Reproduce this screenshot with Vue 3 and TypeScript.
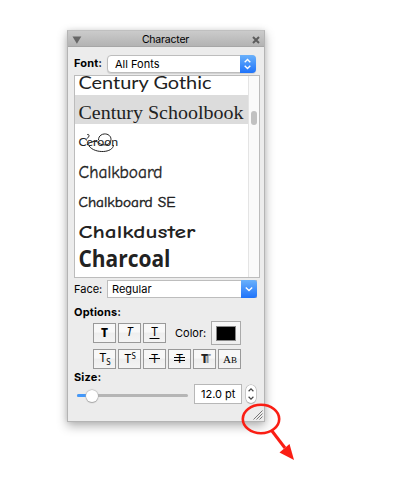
<script setup lang="ts">
interface Sample {
  name: string
  cls: string
  height: number
  baseline: number
  width: number
}

const samples: Sample[] = [
  { name: 'Century Gothic', cls: 'gothic', height: 19, baseline: 13, width: 133 },
  { name: 'Century Schoolbook', cls: 'school', height: 29, baseline: 24, width: 165 },
  { name: 'Ceroon', cls: 'ceroon', height: 34, baseline: 22, width: 39.5 },
  { name: 'Chalkboard', cls: 'chalk', height: 30, baseline: 20, width: 84 },
  { name: 'Chalkboard SE', cls: 'chalkse', height: 30, baseline: 19, width: 97 },
  { name: 'Chalkduster', cls: 'duster', height: 27, baseline: 20, width: 117 },
  { name: 'Charcoal', cls: 'charcoal', height: 32, baseline: 22, width: 92 },
]
const selected = 'Century Schoolbook'
const size = '12.0 pt'
</script>

<template>
  <main class="stage">
    <section class="panel">
      <header class="title">
        <svg class="tri" width="10" height="8"><path d="M0.5 0.5H9.3L4.9 7.8Z" fill="#666" /></svg>
        <span>Character</span>
        <svg class="close" width="8" height="8"><path d="M1 1L7 7M7 1L1 7" stroke="#5c5c5c" stroke-width="2" /></svg>
      </header>

      <div class="row font-row">
        <b class="label">Font:</b>
        <div class="select rounded">
          <span>All Fonts</span>
          <i class="cap"><svg width="15" height="18"><path d="M4.7 7.2L7.5 4.5L10.3 7.2M4.7 10.8L7.5 13.5L10.3 10.8" /></svg></i>
        </div>
      </div>

      <div class="list">
        <div class="items">
          <div
            v-for="s in samples"
            :key="s.name"
            class="item"
            :class="{ on: s.name === selected }"
            :style="{ height: s.height + 'px' }"
          >
            <svg width="173" :height="s.height">
              <text :class="s.cls" x="3.5" :y="s.baseline" :textLength="s.width" lengthAdjust="spacingAndGlyphs">{{ s.name }}</text>
              <path
                v-if="s.cls === 'ceroon'"
                class="swash"
                d="M12 11C13 9.5 15 11 13.5 13C12 15 10 15.5 12 16.5M23.5 16C23.5 8 36 8 36 15.5C36 22 27 22 24 19C20 15.5 15 18 12 21M14 22C20 30 38 29 38.5 21"
              />
            </svg>
          </div>
        </div>
        <div class="scroll"><i></i></div>
      </div>

      <div class="row face-row">
        <span class="label">Face:</span>
        <div class="select">
          <span>Regular</span>
          <i class="cap"><svg width="16" height="18"><path d="M4.8 7.6L8 10.6L11.2 7.6" /></svg></i>
        </div>
      </div>

      <b class="heading options">Options:</b>
      <div class="tools first">
        <button><svg><text class="bold" x="11.5" y="14">T</text></svg></button>
        <button><svg><text class="ital" x="11.5" y="13">T</text></svg></button>
        <button><svg><text x="11.5" y="13">T</text><path d="M6.5 15.5H16.5" /></svg></button>
        <span class="color">Color:</span>
        <div class="well"><i></i></div>
      </div>
      <div class="tools second">
        <button><svg><text x="9.8" y="13">T</text><text class="small" x="15.5" y="15.5">S</text></svg></button>
        <button><svg><text x="9.8" y="14">T</text><text class="small" x="15.8" y="9.5">S</text></svg></button>
        <button><svg><text x="11.5" y="14">T</text><path d="M6 9.5H17" /></svg></button>
        <button><svg><text x="11.5" y="14">T</text><path d="M6 8.5H17M6 11.5H17" /></svg></button>
        <button><svg><text class="bold shade" x="11.5" y="14">T</text></svg></button>
        <button><svg><text class="serif" x="9" y="14">A</text><text class="serif sm" x="16" y="14">B</text></svg></button>
      </div>

      <b class="heading size">Size:</b>
      <div class="size-row">
        <div class="slider"><i class="fill"></i><i class="knob"></i></div>
        <div class="field">{{ size }}</div>
        <div class="stepper">
          <svg width="10" height="18"><path d="M2.6 6.2L5 3.9L7.4 6.2M2.6 11.8L5 14.1L7.4 11.8" /></svg>
        </div>
      </div>
      <footer>
        <svg width="10" height="10"><path d="M0.5 9.5L9.5 0.5M3.5 9.5L9.5 3.5M6.5 9.5L9.5 6.5" stroke="#777" stroke-width="1" /></svg>
      </footer>
    </section>

    <svg class="callout" width="60" height="62">
      <ellipse cx="21" cy="19" rx="18.2" ry="14.2" fill="none" stroke="#fa1e14" stroke-width="2.6" />
      <path d="M32 31L45 48" stroke="#fa1e14" stroke-width="3" />
      <path d="M54 60L39.5 52.5L49.5 44Z" fill="#fa1e14" />
    </svg>
  </main>
</template>

<style>
body {
  margin: 0;
  background: #fff;
}
</style>

<style scoped>
* {
  box-sizing: border-box;
}
.stage {
  position: relative;
  width: 406px;
  height: 478px;
  padding: 30px 0 0 67px;
  overflow: hidden;
  font: 11px/14px Inter, 'Liberation Sans', sans-serif;
  color: #000;
}
.panel {
  display: flex;
  flex-direction: column;
  width: 198px;
  height: 392px;
  border: 1px solid #b4b4b4;
  border-top-color: #c0c0c0;
  background: #ececec;
  box-shadow: 0 4px 10px rgba(0, 0, 0, 0.3), 0 0 5px rgba(0, 0, 0, 0.08);
}
.title {
  display: flex;
  align-items: center;
  justify-content: space-between;
  height: 16px;
  padding: 2px 4px 0;
  border-bottom: 1px solid #a6a6a6;
  background: linear-gradient(#cbcbcb, #b3b3b3);
  flex: none;
}
.title span {
  margin-right: 3px;
  font-size: 10.5px;
  letter-spacing: -0.2px;
}
.row {
  display: flex;
  align-items: center;
  padding-left: 6px;
}
.font-row {
  height: 18px;
  margin-top: 8px;
}
.font-row .label {
  line-height: 12px;
  padding-bottom: 2px;
}
.label {
  width: 33px;
  white-space: nowrap;
}
b {
  font-weight: 700;
  letter-spacing: 0.15px;
}
.select {
  display: flex;
  justify-content: space-between;
  align-items: center;
  width: 150px;
  height: 18px;
  padding-left: 4px;
  border: 1px solid #bdbdbd;
  background: #fff;
}
.select .cap {
  display: flex;
  width: 16px;
  height: 18px;
  margin-right: -1px;
  border-radius: 0 3px 3px 0;
  background: linear-gradient(#6ab1fb, #1f73fa);
  flex: none;
}
.rounded {
  width: 149px;
  padding-left: 7px;
  border-radius: 4px;
  box-shadow: 0 1px 1px rgba(0, 0, 0, 0.12);
}
.rounded .cap {
  border-radius: 0 4px 4px 0;
}
.cap path {
  fill: none;
  stroke: #fff;
  stroke-width: 1.4;
}
.list {
  display: flex;
  width: 186px;
  height: 203px;
  margin: 2px 0 0 6px;
  border: 1px solid #bcbcbc;
  background: #fff;
  flex: none;
}
.items {
  width: 173px;
  overflow: hidden;
}
.item svg {
  display: block;
}
.item text {
  fill: #222;
}
.on {
  background: #dcdcdc;
}
.gothic {
  font: 18px Lato, sans-serif;
}
.school {
  font: 19.5px 'Liberation Serif', serif;
}
.ceroon {
  font: 12px Lato, sans-serif;
}
.swash {
  fill: none;
  stroke: #222;
  stroke-width: 1;
}
.chalk {
  font: 17px 'Comic Neue', 'Noto Sans', cursive;
  stroke: #222;
  stroke-width: 0.3px;
}
.chalkse {
  font: 13.5px 'Comic Neue', 'Noto Sans', cursive;
  stroke: #222;
  stroke-width: 0.4px;
}
.duster {
  font: 600 18px 'Comic Neue', 'Noto Sans', cursive;
}
.charcoal {
  font: 700 22.5px 'Open Sans', sans-serif;
}
.scroll {
  flex: 1;
  padding: 35px 0 0 2px;
  border-left: 1px solid #e4e4e4;
  background: #fafafa;
}
.scroll i {
  display: block;
  width: 6px;
  height: 14px;
  border-radius: 3px;
  background: #c1c1c1;
}
.face-row {
  height: 18px;
  margin-top: 2px;
  flex: none;
}
.heading {
  height: 14px;
  margin-left: 6px;
}
.options {
  margin-top: 7px;
}
.tools {
  display: flex;
  align-items: center;
  gap: 2px;
  padding-left: 25px;
}
.first {
  height: 24px;
  margin-top: 2px;
}
.second {
  height: 20px;
  margin-top: 4px;
}
button {
  width: 23px;
  height: 20px;
  padding: 0;
  border: 1px solid #999;
  background: linear-gradient(#f8f8f8 45%, #eee 50%, #f4f4f4);
}
button svg {
  display: block;
  width: 23px;
  height: 20px;
  margin: -1px;
}
button text {
  font: 12px 'Noto Sans', sans-serif;
  text-anchor: middle;
}
button path {
  stroke: #000;
  stroke-width: 1;
}
button .bold {
  font-weight: 800;
}
button .ital {
  font-style: italic;
}
button .small {
  font-size: 8px;
}
button .shade {
  fill: #222;
  text-shadow: 3px 0 0.5px #999;
}
button .serif {
  font: 11px 'Liberation Serif', serif;
}
button .sm {
  font-size: 9px;
}
.color {
  width: 34px;
  margin-left: 7px;
}
.well {
  display: flex;
  align-items: center;
  justify-content: center;
  width: 30px;
  height: 24px;
  border: 1px solid #aaa;
  background: linear-gradient(#f8f8f8, #eee);
}
.well i {
  width: 20px;
  height: 15px;
  border: 1px solid #888;
  background: #000;
}
.size {
  margin-top: 1px;
}
.size-row {
  display: flex;
  align-items: center;
  height: 20px;
  padding-left: 9px;
}
.slider {
  display: flex;
  align-items: center;
  width: 111px;
  height: 3px;
  margin-top: 3px;
  border-radius: 2px;
  background: #b5b5b5;
}
.fill {
  width: 9px;
  height: 3px;
  border-radius: 2px 0 0 2px;
  background: #4398fa;
}
.knob {
  width: 12px;
  height: 12px;
  border-radius: 50%;
  background: #fff;
  box-shadow: 0 0 1px 0.5px #aaa, 0 1px 1px #aaa;
}
.field {
  width: 48px;
  height: 20px;
  margin-left: 6px;
  padding-left: 6px;
  border: 1px solid #b7b7b7;
  background: #fff;
  line-height: 19px;
  white-space: nowrap;
}
.stepper {
  width: 10px;
  height: 18px;
  margin-left: 4px;
  border-radius: 5px;
  background: #fff;
  box-shadow: 0 0 0 0.5px #aaa, 0 1px 1px #bbb;
}
.stepper svg {
  display: block;
}
.stepper path {
  fill: none;
  stroke: #444;
  stroke-width: 1.2;
}
footer {
  display: flex;
  justify-content: flex-end;
  padding: 6px 1px 0 0;
}
.callout {
  position: absolute;
  left: 240px;
  top: 400px;
}
</style>
